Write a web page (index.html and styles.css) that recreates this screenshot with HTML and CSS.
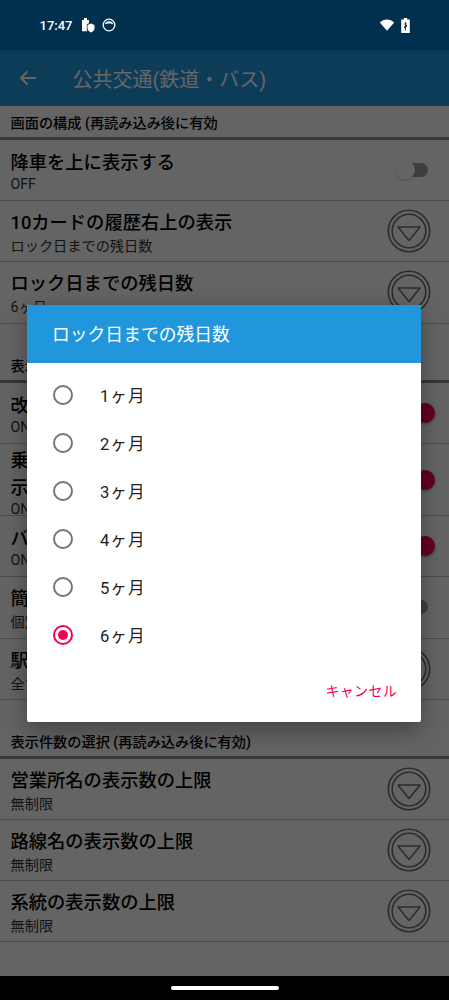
FILE: index.html
```html
<!DOCTYPE html>
<html lang="ja">
<head>
<meta charset="utf-8">
<title>公共交通(鉄道・バス)</title>
<link rel="stylesheet" href="styles.css">
</head>
<body>
<svg class="defs" width="0" height="0" aria-hidden="true">
  <symbol id="drop" viewBox="0 0 46 46">
    <circle cx="23" cy="23" r="20.700" fill="none" stroke="currentColor" stroke-width="1.600"/>
    <circle cx="23" cy="23" r="16.800" fill="none" stroke="currentColor" stroke-width="1.600"/>
    <path d="M12 19H34L23 32.500Z" fill="none" stroke="currentColor" stroke-width="1.600" stroke-linejoin="round"/>
  </symbol>
</svg>
<div class="phone">
  <header class="status">
    <div class="status-left">
      <span class="time">17:47</span>
      <svg class="ico" width="14" height="16" viewBox="0 0 14 16"><path d="M1 3h2V1h3v2h2v3.200L5.800 7.200V12c0 .8.200 1.500.5 2.200H1Z" fill="#fff"/><path d="M10 6.500l3.500 1.400V11c0 2-1.500 3.500-3.500 4.500C8 14.500 6.500 13 6.500 11V7.900Z" fill="#fff"/></svg>
      <svg class="ico" width="14" height="14" viewBox="0 0 14 14"><circle cx="7" cy="7" r="5.800" fill="none" stroke="#fff" stroke-width="1.300"/><path d="M2.800 6.500C3 4 5 3.200 7 3.200S11 4 11.200 6.500C9.500 5.200 4.500 5.200 2.800 6.500Z" fill="#fff"/></svg>
    </div>
    <div class="status-right">
      <svg class="ico" width="16" height="12" viewBox="0 0 16 12"><path d="M0.800 3.400C5 -.6 11 -.6 15.200 3.400L8 11.800Z" fill="#fff"/></svg>
      <svg class="ico" width="9" height="15" viewBox="0 0 9 15"><path d="M2.800 0h3.400v1.400H8.800V15H.2V1.400h2.600Z" fill="#fff"/><path d="M4.500 3.500 3.300 6.500H4.100V8.800L3 7.800V9.500L4.100 10.500V12.500H4.900V9.500L6 8.500V7H4.900V6.500H5.700Z" fill="#00304d"/></svg>
    </div>
  </header>
  <main class="screen">
    <div class="appbar">
      <svg class="back" width="18" height="18" viewBox="0 0 18 18"><path d="M17 9H2M8.500 2.500 2 9l6.500 6.500" fill="none" stroke="#fff" stroke-width="1.800"/></svg>
      <h1 class="appbar-title">公共交通(鉄道・バス)</h1>
    </div>
    <section>
      <h2 class="section-head">画面の構成 (再読み込み後に有効</h2>
      <div class="row"><div class="row-text"><div class="row-title">降車を上に表示する</div><div class="row-sub latin">OFF</div></div><span class="switch"></span></div>
      <div class="row"><div class="row-text"><div class="row-title">10カードの履歴右上の表示</div><div class="row-sub">ロック日までの残日数</div></div><svg class="drop"><use href="#drop"/></svg></div>
      <div class="row"><div class="row-text"><div class="row-title">ロック日までの残日数</div><div class="row-sub">6ヶ月</div></div><svg class="drop"><use href="#drop"/></svg></div>
    </section>
    <section>
      <h2 class="section-head spaced">表示設定</h2>
      <div class="row"><div class="row-text"><div class="row-title">改行表示</div><div class="row-sub latin">ON</div></div><span class="switch on"></span></div>
      <div class="row tall"><div class="row-text"><div class="row-title">乗換案内<br>示す</div><div class="row-sub latin">ON</div></div><span class="switch on"></span></div>
      <div class="row"><div class="row-text"><div class="row-title">バス時刻</div><div class="row-sub latin">ON</div></div><span class="switch on"></span></div>
      <div class="row"><div class="row-text"><div class="row-title">簡易表示</div><div class="row-sub">個別</div></div><span class="switch"></span></div>
      <div class="row"><div class="row-text"><div class="row-title">駅名表示</div><div class="row-sub">全て</div></div><svg class="drop"><use href="#drop"/></svg></div>
    </section>
    <section>
      <h2 class="section-head spaced last">表示件数の選択 (再読み込み後に有効)</h2>
      <div class="row"><div class="row-text"><div class="row-title">営業所名の表示数の上限</div><div class="row-sub">無制限</div></div><svg class="drop"><use href="#drop"/></svg></div>
      <div class="row"><div class="row-text"><div class="row-title">路線名の表示数の上限</div><div class="row-sub">無制限</div></div><svg class="drop"><use href="#drop"/></svg></div>
      <div class="row"><div class="row-text"><div class="row-title">系統の表示数の上限</div><div class="row-sub">無制限</div></div><svg class="drop"><use href="#drop"/></svg></div>
    </section>
    <div class="scrim"></div>
    <div class="dialog">
      <div class="dialog-title">ロック日までの残日数</div>
      <ul class="options">
        <li class="option"><span class="radio"></span>1ヶ月</li>
        <li class="option"><span class="radio"></span>2ヶ月</li>
        <li class="option"><span class="radio"></span>3ヶ月</li>
        <li class="option"><span class="radio"></span>4ヶ月</li>
        <li class="option"><span class="radio"></span>5ヶ月</li>
        <li class="option"><span class="radio checked"></span>6ヶ月</li>
      </ul>
      <div class="actions"><span class="cancel">キャンセル</span></div>
    </div>
  </main>
  <footer class="navbar"><span class="pill"></span></footer>
</div>
</body>
</html>
```

FILE: styles.css
```css
* { box-sizing: border-box; }
html, body { margin: 0; padding: 0; }
body { width: 449px; height: 1000px; overflow: hidden; background: #000; font-family: Roboto, "Noto Sans CJK JP", sans-serif; color: #000; }
.defs { position: absolute; }
.phone { display: flex; flex-direction: column; height: 1000px; }

.status { flex: 0 0 50px; background: #00304d; display: flex; justify-content: space-between; align-items: center; padding: 0 39px 0 39.500px; color: #fff; }
.status-left, .status-right { display: flex; align-items: center; }
.status-left { gap: 7px; }
.status-right { gap: 6px; }
.time { font-size: 13px; font-weight: 500; margin-right: 2px; }
.ico { display: block; }

.screen { position: relative; flex: 1; background: #fafafa; overflow: hidden; }
.appbar { height: 56px; background: #2196dc; display: flex; align-items: center; color: #fff; }
.back { margin-left: 19px; }
.appbar-title { margin: 0 0 0 35.500px; font-size: 20px; font-weight: 400; white-space: nowrap; }

.section-head { margin: 0; height: 34px; padding: 7px 10.500px 0; font-size: 14.200px; line-height: 20px; font-weight: 500; border-bottom: 3px solid #8a8a8a; }
.section-head.spaced { height: 59.400px; padding-top: 32.500px; }
.section-head.spaced.last { height: 59px; padding-top: 32px; }

.row { display: flex; align-items: center; justify-content: space-between; height: 61.200px; padding: 0 18px 0 10.500px; border-bottom: 1px solid #bdbdbd; }
.row.tall { height: 72px; }
.row-text { min-width: 0; align-self: flex-start; padding-top: 9px; }
.row-text:has(.latin) { padding-top: 10px; }
.row-title { font-size: 18.300px; line-height: 26px; font-weight: 500; }
.row-sub { font-size: 14.200px; line-height: 21px; color: #333; }
.row-sub.latin { line-height: 16px; }
.row.tall .row-text { padding-top: 3px; }
.tall .row-title { line-height: 27px; }
.drop { width: 46px; height: 46px; margin-right: -1px; color: #707070; flex: none; }

.switch { position: relative; display: block; width: 24px; height: 14px; margin-right: 3px; border-radius: 7px; background: #9b9b9b; flex: none; }
.switch::after { content: ""; position: absolute; left: -9px; top: -3px; width: 20px; height: 20px; border-radius: 50%; background: #fafafa; box-shadow: 0 1px 2px rgba(0,0,0,.2); }
.switch.on { background: #f8a; }
.switch.on::after { left: 11px; background: #f50057; box-shadow: 0 1px 3px rgba(0,0,0,.4); }

.scrim { position: absolute; inset: 0; background: rgba(0,0,0,.6); }

.dialog { position: absolute; left: 27px; top: 254.500px; width: 394px; height: 417.500px; background: #fff; border-radius: 2px; box-shadow: 0 8px 24px rgba(0,0,0,.35); overflow: hidden; display: flex; flex-direction: column; }
.dialog-title { flex: 0 0 58px; background: #2196dc; color: #fff; font-size: 17.800px; padding: 1px 0 0 25px; line-height: 57px; }
.options { list-style: none; margin: 0; padding: 8.500px 0 0; }
.option { display: flex; align-items: center; height: 48px; padding-left: 26.300px; font-size: 16.600px; letter-spacing: 1px; color: #212121; }
.radio { position: relative; flex: none; width: 20px; height: 20px; margin-right: 26.700px; border: 2px solid #757575; border-radius: 50%; }
.radio.checked { border-color: #f50057; }
.radio.checked::after { content: ""; position: absolute; inset: 3px; border-radius: 50%; background: #f50057; }
.actions { display: flex; justify-content: flex-end; padding: 22px 24px 0 0; }
.cancel { font-size: 14px; line-height: 20px; letter-spacing: .3px; color: #f50057; }

.navbar { flex: 0 0 24px; background: #000; display: flex; align-items: center; justify-content: center; }
.pill { width: 108px; height: 4px; border-radius: 2px; background: #fff; }
```
